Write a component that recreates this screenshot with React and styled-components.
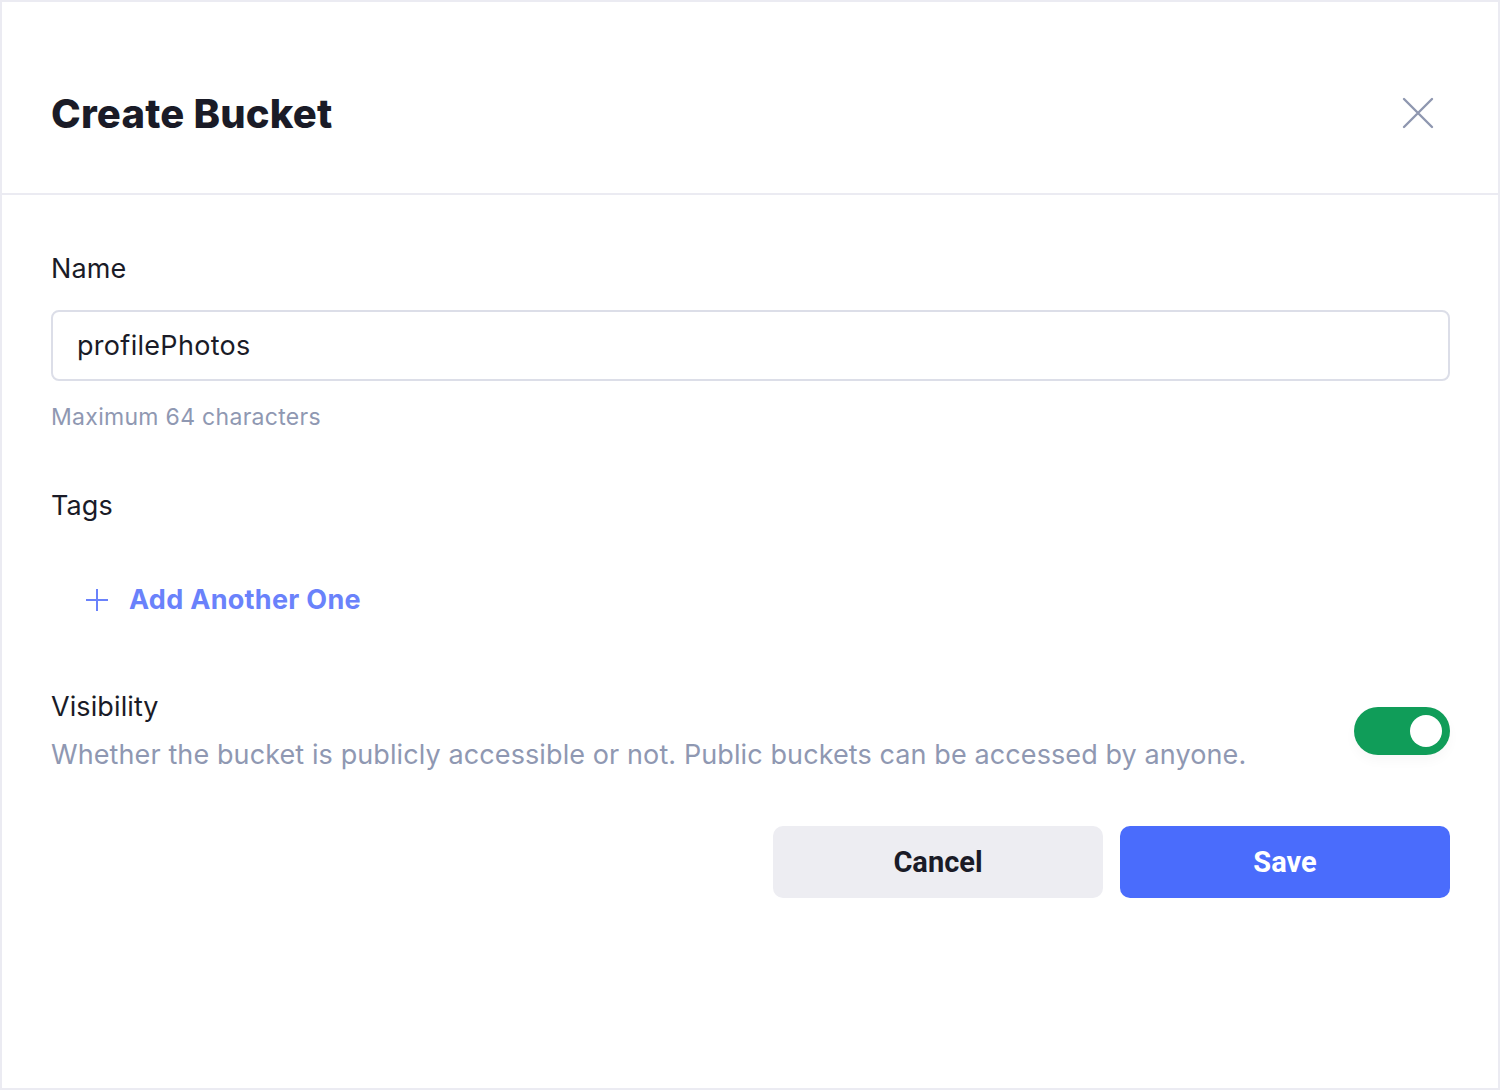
import React from "react";
import styled, { createGlobalStyle } from "styled-components";

const GlobalStyle = createGlobalStyle`
  * { box-sizing: border-box; }
  html, body { margin: 0; padding: 0; background: #ebebf2; }
  body { font-family: Inter, "Noto Sans", sans-serif; }
`;

const Dialog = styled.div`
  width: 1500px;
  height: 1090px;
  background: #ffffff;
  border: 2px solid #ebebf2;
  display: flex;
  flex-direction: column;
`;

const Header = styled.div`
  height: 193px;
  border-bottom: 2px solid #ebebf2;
  display: flex;
  align-items: center;
  justify-content: space-between;
  padding: 31px 64px 0 49px;
`;

const Title = styled.h1`
  margin: 0;
  font-size: 40px;
  font-weight: 800;
  color: #1a1b27;
  letter-spacing: 0.2px;
`;

const CloseButton = styled.button`
  border: 0;
  background: none;
  padding: 0;
  width: 32px;
  height: 32px;
  cursor: pointer;
  display: flex;
`;

const Body = styled.div`
  padding: 57px 48px 0 49px;
  display: flex;
  flex-direction: column;
`;

const Label = styled.div`
  font-size: 27px;
  color: #1a1b27;
  line-height: 34px;
  letter-spacing: 0.1px;
`;

const Input = styled.input`
  margin-top: 24px;
  height: 71px;
  width: 100%;
  border: 2px solid #dcdee8;
  border-radius: 8px;
  padding: 0 24px;
  font-family: Inter, sans-serif;
  font-size: 27px;
  letter-spacing: 0.3px;
  color: #1a1b27;
  outline: none;
`;

const Hint = styled.div`
  margin-top: ${(p) => p.$top || 0}px;
  font-size: ${(p) => p.$size || 23}px;
  letter-spacing: ${(p) => p.$spacing || 0.3}px;
  color: #8f98b2;
  line-height: 34px;
`;

const Section = styled.div`
  margin-top: ${(p) => p.$top}px;
`;

const AddLink = styled.button`
  margin-top: 60px;
  margin-left: 34px;
  border: 0;
  background: none;
  padding: 0;
  display: flex;
  align-items: center;
  gap: 20px;
  font-family: Inter, sans-serif;
  font-size: 27px;
  font-weight: 700;
  letter-spacing: 0.3px;
  color: #6a82fb;
  cursor: pointer;
`;

const VisibilityRow = styled.div`
  margin-top: 74px;
  display: flex;
  align-items: center;
  justify-content: space-between;
`;

const Toggle = styled.div`
  width: 96px;
  height: 48px;
  border-radius: 24px;
  background: #109d59;
  display: flex;
  align-items: center;
  justify-content: flex-end;
  padding: 0 8px;
  box-shadow: 0 6px 12px rgba(0, 0, 0, 0.03);
`;

const Knob = styled.div`
  width: 32px;
  height: 32px;
  border-radius: 50%;
  background: #ffffff;
`;

const Actions = styled.div`
  margin-top: 54px;
  display: flex;
  justify-content: flex-end;
  gap: 17px;
`;

const Button = styled.button`
  width: 330px;
  height: 72px;
  border: 0;
  border-radius: 10px;
  font-family: Roboto, sans-serif;
  font-weight: 700;
  font-size: 29px;
  background: ${(p) => (p.$primary ? "#4a6cfc" : "#ededf2")};
  color: ${(p) => (p.$primary ? "#ffffff" : "#1a1b27")};
  cursor: pointer;
`;

export default function App() {
  return (
    <>
      <GlobalStyle />
      <Dialog>
        <Header>
          <Title>Create Bucket</Title>
          <CloseButton aria-label="Close">
            <svg width="32" height="32" viewBox="0 0 32 32" fill="none">
              <path d="M2 2L30 30M30 2L2 30" stroke="#8f97b0" strokeWidth="2.4" strokeLinecap="round" />
            </svg>
          </CloseButton>
        </Header>
        <Body>
          <Label>Name</Label>
          <Input defaultValue="profilePhotos" />
          <Hint $top={19}>Maximum 64 characters</Hint>
          <Section $top={55}>
            <Label>Tags</Label>
          </Section>
          <AddLink>
            <svg width="24" height="24" viewBox="0 0 24 24" fill="none">
              <path d="M12 1V23M1 12H23" stroke="#6a82fb" strokeWidth="2" />
            </svg>
            Add Another One
          </AddLink>
          <VisibilityRow>
            <div>
              <Label>Visibility</Label>
              <Hint $size={27} $spacing={0.1} $top={14}>
                Whether the bucket is publicly accessible or not. Public buckets can be accessed by anyone.
              </Hint>
            </div>
            <Toggle>
              <Knob />
            </Toggle>
          </VisibilityRow>
          <Actions>
            <Button>Cancel</Button>
            <Button $primary>Save</Button>
          </Actions>
        </Body>
      </Dialog>
    </>
  );
}
